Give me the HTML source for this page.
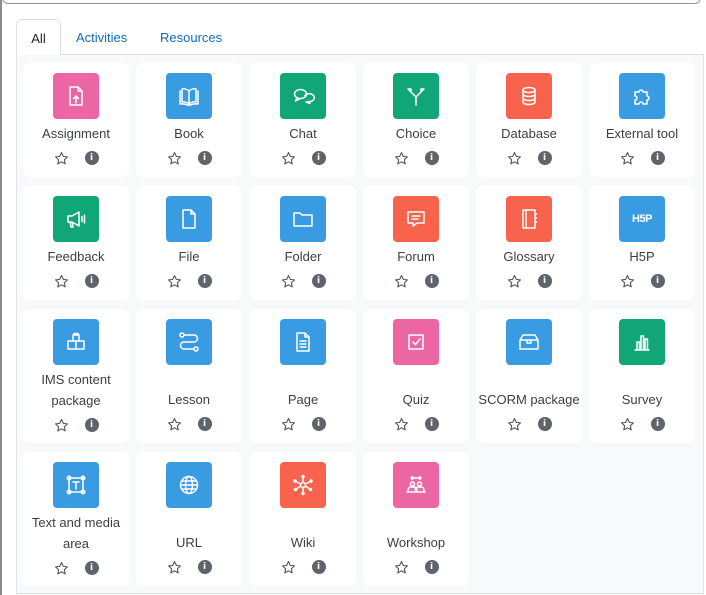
<!DOCTYPE html>
<html><head><meta charset="utf-8"><style>
*{box-sizing:border-box;margin:0;padding:0}
body{width:706px;height:595px;background:#fff;font-family:"Liberation Sans",sans-serif;position:relative;overflow:hidden}
.lb{position:absolute;left:0;top:0;width:2px;height:595px;background:#8a8d90}
.inp{position:absolute;left:2px;top:-10px;width:699px;height:14px;border:1px solid #8f959e;border-top:none;border-radius:0 0 6px 6px}
.tab{position:absolute;top:19px;height:36px;font-size:13px;line-height:38px;color:#0f6cbf}
.tab.all{left:16px;width:45px;border:1px solid #dee2e6;border-bottom:none;border-radius:6px 6px 0 0;background:#fff;color:#1d2125;text-align:center;z-index:2}
.panel{position:absolute;left:16px;top:54px;width:688px;height:540px;background:#f8f9fa;border:1px solid #dee2e6}
.c{position:absolute;width:106px;background:#fff;border-radius:7px;display:flex;flex-direction:column;align-items:center;padding-top:10px}
.ic{width:46px;height:46px;border-radius:4px;display:flex;align-items:center;justify-content:center}
.ic svg{width:24px;height:24px;fill:none;stroke:#fff;stroke-width:1.5;stroke-linecap:round;stroke-linejoin:round}
.l{margin-top:4px;font-size:13px;line-height:21px;color:#3a3f44;text-align:center}
.l.s{margin-top:24px}
.a{margin-top:6px;display:flex;gap:16px;align-items:center;height:16px}
.st{width:15px;height:15px}
.inf{width:14px;height:14px;border-radius:50%;background:#5e646a;color:#fff;font-size:9px;font-weight:bold;line-height:14px;text-align:center;font-family:"DejaVu Sans",sans-serif}
.p{background:#eb66a2}.b{background:#399be2}.g{background:#11a676}.r{background:#f7634d}
</style></head><body>
<div class="lb"></div><div class="inp"></div>
<div class="panel"></div>
<div class="tab all">All</div>
<div class="tab" style="left:76px">Activities</div>
<div class="tab" style="left:160px">Resources</div>

<!-- row 1 -->
<div class="c" style="left:23px;top:63px;height:114px"><div class="ic p"><svg viewBox="0 0 24 24"><path d="M6 3h8l4 4v14H6z M14 3v4h4 M12 19v-7 M9.5 14.5 12 12l2.5 2.5"/></svg></div><div class="l">Assignment</div><div class="a"><svg class="st" viewBox="0 0 24 24"><path d="M12 2.5l2.9 6.1 6.6.8-4.9 4.6 1.3 6.6L12 17.3 6.1 20.6l1.3-6.6L2.5 9.4l6.6-.8z" fill="none" stroke="#50565c" stroke-width="1.8" stroke-linejoin="round"/></svg><div class="inf">i</div></div></div>
<div class="c" style="left:136px;top:63px;height:114px"><div class="ic b"><svg viewBox="0 0 24 24"><path d="M12 7c-2-2-5-2.5-7-2v13c2-.5 5 0 7 2 2-2 5-2.5 7-2V5c-2-.5-5 0-7 2zM12 7v13M3 7v13c3-.5 6 0 9 1.5 3-1.5 6-2 9-1.5V7"/></svg></div><div class="l">Book</div><div class="a"><svg class="st" viewBox="0 0 24 24"><path d="M12 2.5l2.9 6.1 6.6.8-4.9 4.6 1.3 6.6L12 17.3 6.1 20.6l1.3-6.6L2.5 9.4l6.6-.8z" fill="none" stroke="#50565c" stroke-width="1.8" stroke-linejoin="round"/></svg><div class="inf">i</div></div></div>
<div class="c" style="left:250px;top:63px;height:114px"><div class="ic g"><svg viewBox="0 0 24 24"><ellipse cx="9.5" cy="10" rx="6" ry="4.5"/><path d="M6 14l-1.5 3 4-2M14 11.5a5 4 0 1 1 3 6l2 2-4-1.5"/></svg></div><div class="l">Chat</div><div class="a"><svg class="st" viewBox="0 0 24 24"><path d="M12 2.5l2.9 6.1 6.6.8-4.9 4.6 1.3 6.6L12 17.3 6.1 20.6l1.3-6.6L2.5 9.4l6.6-.8z" fill="none" stroke="#50565c" stroke-width="1.8" stroke-linejoin="round"/></svg><div class="inf">i</div></div></div>
<div class="c" style="left:363px;top:63px;height:114px"><div class="ic g"><svg viewBox="0 0 24 24"><path d="M12 21v-8M12 13l-5-5M12 13l5-5M4 5l3 0 0 3M20 5l-3 0 0 3M7 8 4 5M17 8l3-3"/></svg></div><div class="l">Choice</div><div class="a"><svg class="st" viewBox="0 0 24 24"><path d="M12 2.5l2.9 6.1 6.6.8-4.9 4.6 1.3 6.6L12 17.3 6.1 20.6l1.3-6.6L2.5 9.4l6.6-.8z" fill="none" stroke="#50565c" stroke-width="1.8" stroke-linejoin="round"/></svg><div class="inf">i</div></div></div>
<div class="c" style="left:476px;top:63px;height:114px"><div class="ic r"><svg viewBox="0 0 24 24"><ellipse cx="12" cy="6" rx="6" ry="2.5"/><path d="M6 6v12c0 1.4 2.7 2.5 6 2.5s6-1.1 6-2.5V6M6 10c0 1.4 2.7 2.5 6 2.5s6-1.1 6-2.5M6 14c0 1.4 2.7 2.5 6 2.5s6-1.1 6-2.5"/></svg></div><div class="l">Database</div><div class="a"><svg class="st" viewBox="0 0 24 24"><path d="M12 2.5l2.9 6.1 6.6.8-4.9 4.6 1.3 6.6L12 17.3 6.1 20.6l1.3-6.6L2.5 9.4l6.6-.8z" fill="none" stroke="#50565c" stroke-width="1.8" stroke-linejoin="round"/></svg><div class="inf">i</div></div></div>
<div class="c" style="left:589px;top:63px;height:114px"><div class="ic b"><svg viewBox="0 0 24 24"><path d="M5 8h4a2 2 0 1 1 4 0h4v4a2 2 0 1 1 0 4v4h-4a2 2 0 1 0-4 0H5v-4a2 2 0 1 0 0-4z"/></svg></div><div class="l">External tool</div><div class="a"><svg class="st" viewBox="0 0 24 24"><path d="M12 2.5l2.9 6.1 6.6.8-4.9 4.6 1.3 6.6L12 17.3 6.1 20.6l1.3-6.6L2.5 9.4l6.6-.8z" fill="none" stroke="#50565c" stroke-width="1.8" stroke-linejoin="round"/></svg><div class="inf">i</div></div></div>

<!-- row 2 -->
<div class="c" style="left:23px;top:186px;height:114px"><div class="ic g"><svg viewBox="0 0 24 24"><path d="M4 9h4l7-4v14l-7-4H4zM6 15l1 5h2l-1-5M18 9.5v5M20.5 8v8"/></svg></div><div class="l">Feedback</div><div class="a"><svg class="st" viewBox="0 0 24 24"><path d="M12 2.5l2.9 6.1 6.6.8-4.9 4.6 1.3 6.6L12 17.3 6.1 20.6l1.3-6.6L2.5 9.4l6.6-.8z" fill="none" stroke="#50565c" stroke-width="1.8" stroke-linejoin="round"/></svg><div class="inf">i</div></div></div>
<div class="c" style="left:136px;top:186px;height:114px"><div class="ic b"><svg viewBox="0 0 24 24"><path d="M6 3h8l4 4v14H6z M14 3v4h4"/></svg></div><div class="l">File</div><div class="a"><svg class="st" viewBox="0 0 24 24"><path d="M12 2.5l2.9 6.1 6.6.8-4.9 4.6 1.3 6.6L12 17.3 6.1 20.6l1.3-6.6L2.5 9.4l6.6-.8z" fill="none" stroke="#50565c" stroke-width="1.8" stroke-linejoin="round"/></svg><div class="inf">i</div></div></div>
<div class="c" style="left:250px;top:186px;height:114px"><div class="ic b"><svg viewBox="0 0 24 24"><path d="M3 6h6l2 2h10v11H3z"/></svg></div><div class="l">Folder</div><div class="a"><svg class="st" viewBox="0 0 24 24"><path d="M12 2.5l2.9 6.1 6.6.8-4.9 4.6 1.3 6.6L12 17.3 6.1 20.6l1.3-6.6L2.5 9.4l6.6-.8z" fill="none" stroke="#50565c" stroke-width="1.8" stroke-linejoin="round"/></svg><div class="inf">i</div></div></div>
<div class="c" style="left:363px;top:186px;height:114px"><div class="ic r"><svg viewBox="0 0 24 24"><path d="M4 5h16v11h-7l-4 3v-3H4zM8 9h8M8 12h6"/></svg></div><div class="l">Forum</div><div class="a"><svg class="st" viewBox="0 0 24 24"><path d="M12 2.5l2.9 6.1 6.6.8-4.9 4.6 1.3 6.6L12 17.3 6.1 20.6l1.3-6.6L2.5 9.4l6.6-.8z" fill="none" stroke="#50565c" stroke-width="1.8" stroke-linejoin="round"/></svg><div class="inf">i</div></div></div>
<div class="c" style="left:476px;top:186px;height:114px"><div class="ic r"><svg viewBox="0 0 24 24"><path d="M6 3h12v18H6zM9 3v18M18 7h1.5M18 11h1.5M18 15h1.5"/></svg></div><div class="l">Glossary</div><div class="a"><svg class="st" viewBox="0 0 24 24"><path d="M12 2.5l2.9 6.1 6.6.8-4.9 4.6 1.3 6.6L12 17.3 6.1 20.6l1.3-6.6L2.5 9.4l6.6-.8z" fill="none" stroke="#50565c" stroke-width="1.8" stroke-linejoin="round"/></svg><div class="inf">i</div></div></div>
<div class="c" style="left:589px;top:186px;height:114px"><div class="ic b"><span style="color:#fff;font-weight:bold;font-size:11px;letter-spacing:-.5px">H5P</span></div><div class="l">H5P</div><div class="a"><svg class="st" viewBox="0 0 24 24"><path d="M12 2.5l2.9 6.1 6.6.8-4.9 4.6 1.3 6.6L12 17.3 6.1 20.6l1.3-6.6L2.5 9.4l6.6-.8z" fill="none" stroke="#50565c" stroke-width="1.8" stroke-linejoin="round"/></svg><div class="inf">i</div></div></div>

<!-- row 3 -->
<div class="c" style="left:23px;top:309px;height:134px"><div class="ic b"><svg viewBox="0 0 24 24"><path d="M9 5h6v6H9zM4 11h8v8H4zM12 11h8v8h-8zM10 5V3.5h4V5"/></svg></div><div class="l">IMS content<br>package</div><div class="a"><svg class="st" viewBox="0 0 24 24"><path d="M12 2.5l2.9 6.1 6.6.8-4.9 4.6 1.3 6.6L12 17.3 6.1 20.6l1.3-6.6L2.5 9.4l6.6-.8z" fill="none" stroke="#50565c" stroke-width="1.8" stroke-linejoin="round"/></svg><div class="inf">i</div></div></div>
<div class="c" style="left:136px;top:309px;height:134px"><div class="ic b"><svg viewBox="0 0 24 24"><circle cx="5" cy="5" r="2"/><circle cx="19" cy="19" r="2"/><path d="M7 5h10a3.5 3.5 0 0 1 0 7H7a3.5 3.5 0 0 0 0 7h10"/></svg></div><div class="l s">Lesson</div><div class="a"><svg class="st" viewBox="0 0 24 24"><path d="M12 2.5l2.9 6.1 6.6.8-4.9 4.6 1.3 6.6L12 17.3 6.1 20.6l1.3-6.6L2.5 9.4l6.6-.8z" fill="none" stroke="#50565c" stroke-width="1.8" stroke-linejoin="round"/></svg><div class="inf">i</div></div></div>
<div class="c" style="left:250px;top:309px;height:134px"><div class="ic b"><svg viewBox="0 0 24 24"><path d="M6 3h8l4 4v14H6z M14 3v4h4M9 11h6M9 14h6M9 17h6"/></svg></div><div class="l s">Page</div><div class="a"><svg class="st" viewBox="0 0 24 24"><path d="M12 2.5l2.9 6.1 6.6.8-4.9 4.6 1.3 6.6L12 17.3 6.1 20.6l1.3-6.6L2.5 9.4l6.6-.8z" fill="none" stroke="#50565c" stroke-width="1.8" stroke-linejoin="round"/></svg><div class="inf">i</div></div></div>
<div class="c" style="left:363px;top:309px;height:134px"><div class="ic p"><svg viewBox="0 0 24 24"><path d="M5 5h14v14H5zM9 12l2.5 2.5L16 9"/></svg></div><div class="l s">Quiz</div><div class="a"><svg class="st" viewBox="0 0 24 24"><path d="M12 2.5l2.9 6.1 6.6.8-4.9 4.6 1.3 6.6L12 17.3 6.1 20.6l1.3-6.6L2.5 9.4l6.6-.8z" fill="none" stroke="#50565c" stroke-width="1.8" stroke-linejoin="round"/></svg><div class="inf">i</div></div></div>
<div class="c" style="left:476px;top:309px;height:134px"><div class="ic b"><svg viewBox="0 0 24 24"><path d="M3 10l3-5h12l3 5v9H3zM3 10h18M10 10v3h4v-3"/></svg></div><div class="l s">SCORM package</div><div class="a"><svg class="st" viewBox="0 0 24 24"><path d="M12 2.5l2.9 6.1 6.6.8-4.9 4.6 1.3 6.6L12 17.3 6.1 20.6l1.3-6.6L2.5 9.4l6.6-.8z" fill="none" stroke="#50565c" stroke-width="1.8" stroke-linejoin="round"/></svg><div class="inf">i</div></div></div>
<div class="c" style="left:589px;top:309px;height:134px"><div class="ic g"><svg viewBox="0 0 24 24"><path d="M5 20h14M7 12h2.5v8H7zM11 6h2.5v14H11zM15 9h2.5v11H15z"/></svg></div><div class="l s">Survey</div><div class="a"><svg class="st" viewBox="0 0 24 24"><path d="M12 2.5l2.9 6.1 6.6.8-4.9 4.6 1.3 6.6L12 17.3 6.1 20.6l1.3-6.6L2.5 9.4l6.6-.8z" fill="none" stroke="#50565c" stroke-width="1.8" stroke-linejoin="round"/></svg><div class="inf">i</div></div></div>

<!-- row 4 -->
<div class="c" style="left:23px;top:452px;height:134px"><div class="ic b"><svg viewBox="0 0 24 24"><rect x="5" y="5" width="14" height="14"/><circle cx="5" cy="5" r="1.8"/><circle cx="19" cy="5" r="1.8"/><circle cx="5" cy="19" r="1.8"/><circle cx="19" cy="19" r="1.8"/><path d="M9 9h6M12 9v7"/></svg></div><div class="l">Text and media<br>area</div><div class="a"><svg class="st" viewBox="0 0 24 24"><path d="M12 2.5l2.9 6.1 6.6.8-4.9 4.6 1.3 6.6L12 17.3 6.1 20.6l1.3-6.6L2.5 9.4l6.6-.8z" fill="none" stroke="#50565c" stroke-width="1.8" stroke-linejoin="round"/></svg><div class="inf">i</div></div></div>
<div class="c" style="left:136px;top:452px;height:134px"><div class="ic b"><svg viewBox="0 0 24 24"><circle cx="12" cy="12" r="8.5"/><ellipse cx="12" cy="12" rx="3.5" ry="8.5"/><path d="M3.5 12h17M5 8h14M5 16h14"/></svg></div><div class="l s">URL</div><div class="a"><svg class="st" viewBox="0 0 24 24"><path d="M12 2.5l2.9 6.1 6.6.8-4.9 4.6 1.3 6.6L12 17.3 6.1 20.6l1.3-6.6L2.5 9.4l6.6-.8z" fill="none" stroke="#50565c" stroke-width="1.8" stroke-linejoin="round"/></svg><div class="inf">i</div></div></div>
<div class="c" style="left:250px;top:452px;height:134px"><div class="ic r"><svg viewBox="0 0 24 24"><circle cx="12" cy="12" r="2.5"/><path d="M12 9.5V4M14.3 11l5-2.5M14.3 13l4.5 3M12 14.5V20M9.7 13l-4.5 3M9.7 11l-5-2.5"/><circle cx="12" cy="3.5" r="1"/><circle cx="20" cy="8" r="1"/><circle cx="19.5" cy="16.5" r="1"/><circle cx="12" cy="20.5" r="1"/><circle cx="4.5" cy="16.5" r="1"/><circle cx="4" cy="8" r="1"/></svg></div><div class="l s">Wiki</div><div class="a"><svg class="st" viewBox="0 0 24 24"><path d="M12 2.5l2.9 6.1 6.6.8-4.9 4.6 1.3 6.6L12 17.3 6.1 20.6l1.3-6.6L2.5 9.4l6.6-.8z" fill="none" stroke="#50565c" stroke-width="1.8" stroke-linejoin="round"/></svg><div class="inf">i</div></div></div>
<div class="c" style="left:363px;top:452px;height:134px"><div class="ic p"><svg viewBox="0 0 24 24"><path d="M7 5h10M7 5l1.5-1.5M7 5l1.5 1.5M17 5l-1.5-1.5M17 5l-1.5 1.5"/><circle cx="8.5" cy="11" r="2"/><circle cx="15.5" cy="11" r="2"/><path d="M4 19v-2a3 3 0 0 1 3-3h3a3 3 0 0 1 3 3v2M11 17a3 3 0 0 1 3-3h3a3 3 0 0 1 3 3v2M3 19h18"/></svg></div><div class="l s">Workshop</div><div class="a"><svg class="st" viewBox="0 0 24 24"><path d="M12 2.5l2.9 6.1 6.6.8-4.9 4.6 1.3 6.6L12 17.3 6.1 20.6l1.3-6.6L2.5 9.4l6.6-.8z" fill="none" stroke="#50565c" stroke-width="1.8" stroke-linejoin="round"/></svg><div class="inf">i</div></div></div>
</body></html>
